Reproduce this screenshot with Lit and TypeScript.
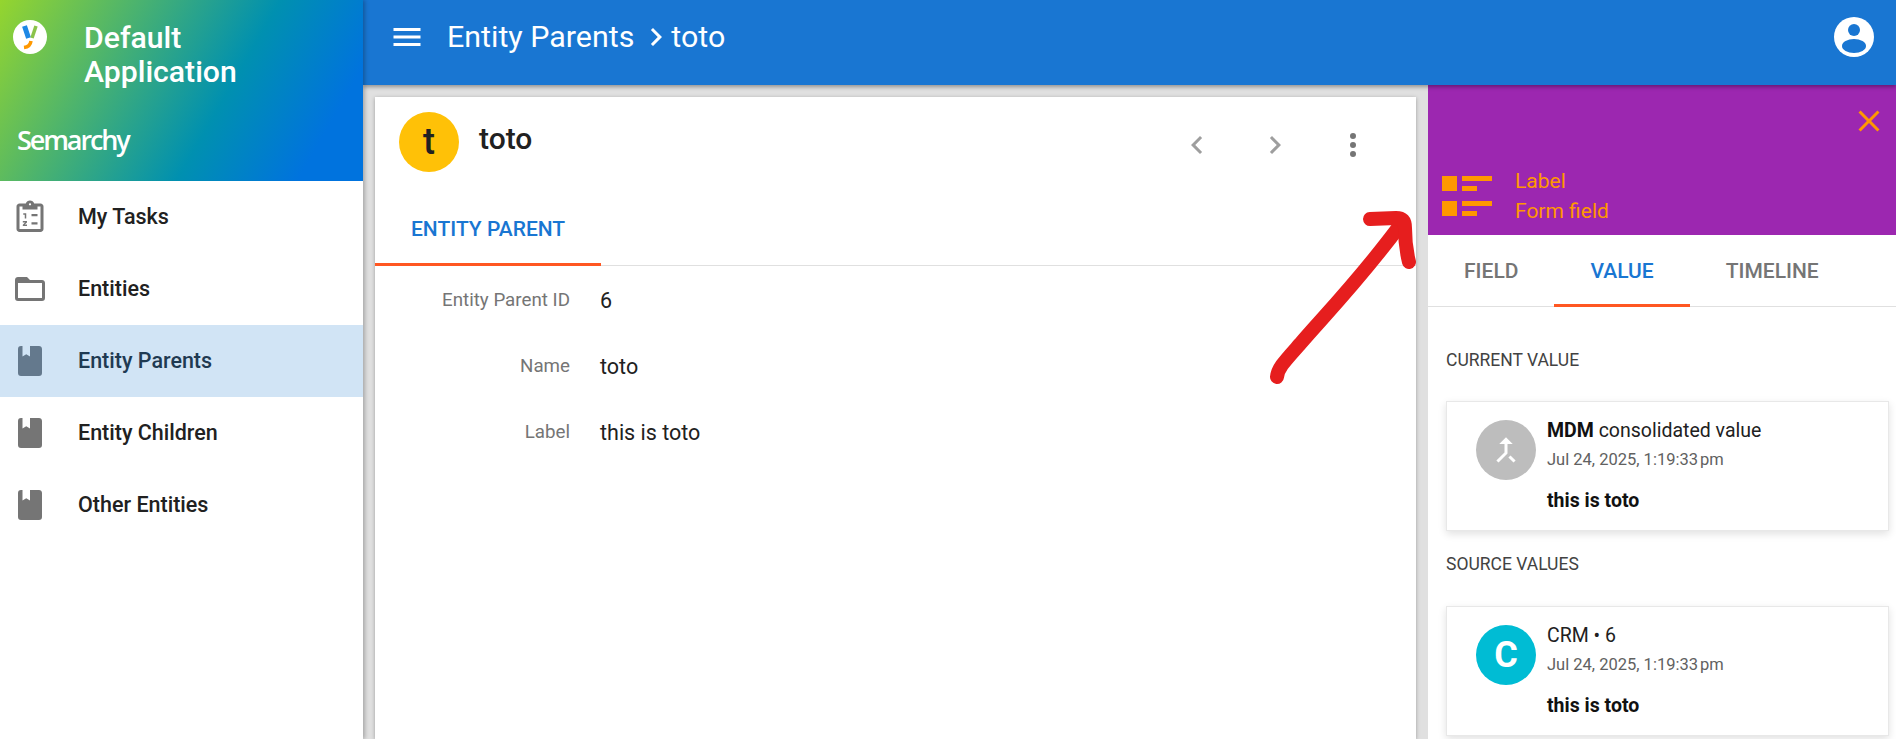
import { LitElement, css, html, svg } from 'lit';
import { customElement } from 'lit/decorators.js';

const BOOK = 'M18,22A2,2 0 0,0 20,20V4C20,2.89 19.1,2 18,2H12V9L9.5,7.5L7,9V2H6A2,2 0 0,0 4,4V20A2,2 0 0,0 6,22H18Z';
const FOLDER = 'M20,18H4V8H20M20,6H12L10,4H4C2.89,4 2,4.89 2,6V18A2,2 0 0,0 4,20H20A2,2 0 0,0 22,18V8C22,6.89 21.1,6 20,6Z';
const TASKS = 'M19,3H14.82C14.4,1.84 13.3,1 12,1C10.7,1 9.6,1.84 9.18,3H5C3.9,3 3,3.9 3,5V20C3,21.1 3.9,22 5,22H19C20.1,22 21,21.1 21,20V5C21,3.9 20.1,3 19,3M12,2.75A.75,.75 0 0,1 12.75,3.5A.75,.75 0 0,1 12,4.25A.75,.75 0 0,1 11.25,3.5A.75,.75 0 0,1 12,2.75M19,20H5V5H7V7H17V5H19V20M13,10H17V11.5H13V10M13,15.5H17V17H13V15.5M7.5,9.5H9.5V13H8.5V10.5H7.5V9.5M7.2,14.7H10V15.6L8.5,17H10V18H7.2V17.1L8.7,15.7H7.2V14.7Z';

const NAV = [
  { label: 'My Tasks', icon: TASKS },
  { label: 'Entities', icon: FOLDER },
  { label: 'Entity Parents', icon: BOOK, active: true },
  { label: 'Entity Children', icon: BOOK },
  { label: 'Other Entities', icon: BOOK },
];

const FIELDS = [
  ['Entity Parent ID', '6'],
  ['Name', 'toto'],
  ['Label', 'this is toto'],
];

const icon = (d: string, cls = '') => html`<svg class="icon ${cls}" viewBox="0 0 24 24">${svg`<path d=${d}></path>`}</svg>`;

@customElement('app-root')
export class AppRoot extends LitElement {
  static styles = css`
    :host {
      display: grid;
      grid-template-columns: 363px 1fr;
      width: 1896px;
      height: 739px;
      overflow: hidden;
      position: relative;
      font-family: Roboto, sans-serif;
      background: #e0e0e0;
      color: #212121;
    }
    .icon {
      width: 36px;
      height: 36px;
      fill: currentColor;
      flex: none;
      display: block;
    }

    /* sidebar */
    .side {
      background: #fff;
      box-shadow: 2px 0 4px rgba(0, 0, 0, 0.25);
      position: relative;
      z-index: 3;
    }
    .brand {
      height: 181px;
      box-sizing: border-box;
      background: linear-gradient(120deg, #95d52e 0%, #0090b0 60%, #0073de 86%);
      color: #fff;
      padding: 20px 0 0 13px;
    }
    .brand-top {
      display: flex;
      gap: 37px;
      height: 105px;
    }
    .logo {
      width: 34px;
      height: 34px;
      flex: none;
    }
    .app-name {
      font-size: 30.2px;
      font-weight: 500;
      line-height: 34px;
      padding-top: 1px;
    }
    .wordmark {
      font-family: 'Open Sans', sans-serif;
      font-size: 27px;
      font-weight: 600;
      letter-spacing: -2.1px;
      line-height: 30px;
      margin-left: 4px;
    }
    .nav-item {
      height: 72px;
      box-sizing: border-box;
      display: flex;
      align-items: center;
      gap: 30px;
      padding-left: 12px;
      font-size: 21.5px;
      font-weight: 500;
      color: #212121;
    }
    .nav-item span {
      margin-top: -2px;
    }
    .nav-item .icon {
      color: #757575;
    }
    .nav-item.active {
      background: #d1e4f5;
      color: #1f3a52;
    }
    .nav-item.active .icon {
      color: #64798d;
    }

    /* main column */
    .main {
      display: flex;
      flex-direction: column;
      min-width: 0;
    }
    .topbar {
      height: 85px;
      flex: none;
      background: #1976d2;
      color: #fff;
      display: flex;
      align-items: center;
      padding: 0 22px 12px 26px;
      box-sizing: border-box;
      box-shadow: 0 2px 4px rgba(0, 0, 0, 0.35);
      position: relative;
      z-index: 2;
      font-size: 30.4px;
    }
    .burger {
      width: 36px;
      height: 36px;
      margin-right: 22px;
    }
    .crumb-sep {
      width: 36px;
      height: 36px;
      margin: 0 -3px 0 4px;
    }
    .account {
      width: 48px;
      height: 48px;
      margin-left: auto;
      margin-right: -4px;
    }
    .body {
      flex: 1;
      display: flex;
      min-height: 0;
    }

    /* record card */
    .card {
      flex: 1;
      margin: 12px 12px 0;
      background: #fff;
      box-shadow: 0 1px 4px rgba(0, 0, 0, 0.3);
    }
    .card-head {
      display: flex;
      align-items: center;
      height: 96px;
      padding: 0 24px 0 24px;
      box-sizing: border-box;
    }
    .avatar {
      width: 60px;
      height: 60px;
      border-radius: 50%;
      flex: none;
      display: flex;
      align-items: center;
      justify-content: center;
    }
    .avatar.amber {
      background: #ffc107;
      color: #212121;
      font-size: 36px;
      font-weight: 500;
      margin-top: -6px;
    }
    .avatar.grey {
      background: #bdbdbd;
      color: #fff;
    }
    .avatar.cyan {
      background: #00bcd4;
      color: #fff;
      font-size: 36px;
      font-weight: 700;
    }
    .record-name {
      font-size: 30px;
      font-weight: 500;
      margin: -14px 0 0 20px;
      flex: 1;
    }
    .head-btn {
      width: 78px;
      display: flex;
      justify-content: center;
      color: #9e9e9e;
    }
    .head-btn.more {
      color: #757575;
    }
    .tabs {
      display: flex;
      border-bottom: 1px solid #e0e0e0;
      height: 73px;
      box-sizing: border-box;
    }
    .tab {
      padding: 2px 36px 2px;
      display: flex;
      align-items: center;
      font-size: 21px;
      font-weight: 500;
      color: #757575;
      margin-bottom: -1px;
      box-sizing: border-box;
    }
    .tab.active {
      color: #1976d2;
      border-bottom: 3px solid #ff5722;
      padding-bottom: 0;
    }
    .fields {
      display: grid;
      grid-template-columns: 195px 1fr;
      column-gap: 30px;
      grid-auto-rows: 66px;
      align-items: center;
      padding-top: 1px;
    }
    .field-label {
      text-align: right;
      font-size: 18.75px;
      color: #757575;
    }
    .field-value {
      font-size: 21.5px;
      color: #212121;
    }

    /* right panel */
    .panel {
      width: 468px;
      flex: none;
      background: #fff;
    }
    .panel-head {
      height: 150px;
      background: #9c27b0;
      color: #ff9800;
      display: flex;
      flex-direction: column;
      justify-content: flex-end;
      position: relative;
      box-sizing: border-box;
      padding: 0 0 9px 14px;
    }
    .panel-close {
      position: absolute;
      top: 18px;
      right: 9px;
    }
    .panel-title {
      display: flex;
      align-items: center;
      gap: 23px;
    }
    .panel-title svg {
      width: 50px;
      height: 40px;
      fill: currentColor;
      flex: none;
    }
    .panel-title div {
      font-size: 21px;
      line-height: 30px;
    }
    .panel .tabs {
      height: 72px;
    }
    .panel-content {
      padding: 0 7px 0 18px;
    }
    .section {
      font-size: 17.5px;
      color: #424242;
      height: 94px;
      padding-top: 41px;
      box-sizing: border-box;
      line-height: 24px;
    }
    .value-card {
      display: flex;
      height: 130px;
      box-sizing: border-box;
      padding: 18px 29px;
      gap: 11px;
      border: 1px solid #e8e8e8;
      box-shadow: 0 3px 8px rgba(0, 0, 0, 0.12);
      background: #fff;
    }
    .value-title {
      font-size: 19.5px;
      line-height: 22px;
      color: #212121;
    }
    .value-title b {
      font-weight: 700;
      color: #111;
    }
    .value-date {
      font-size: 16.5px;
      color: #616161;
      line-height: 22px;
      margin-top: 7px;
    }
    .value-text {
      font-size: 19.5px;
      font-weight: 700;
      color: #111;
      margin-top: 19px;
      line-height: 22px;
    }
    .second {
      height: 75px;
      padding-top: 21px;
    }

    /* hand drawn annotation over the screenshot */
    .arrow {
      position: absolute;
      left: 1260px;
      top: 200px;
      width: 170px;
      height: 190px;
      fill: none;
      stroke: #e61e1e;
      stroke-width: 14;
      stroke-linecap: round;
      stroke-linejoin: round;
      z-index: 5;
      pointer-events: none;
    }
  `;

  private valueCard(avatar: unknown, cls: string, title: unknown) {
    return html`
      <div class="value-card">
        <div class="avatar ${cls}">${avatar}</div>
        <div>
          <div class="value-title">${title}</div>
          <div class="value-date">Jul 24, 2025, 1:19:33\u202fpm</div>
          <div class="value-text">this is toto</div>
        </div>
      </div>
    `;
  }

  render() {
    return html`
      <aside class="side">
        <div class="brand">
          <div class="brand-top">
            <svg class="logo" viewBox="0 0 34 34">
              <circle cx="17" cy="17" r="17" fill="#fff"></circle>
              <path d="M11.5 6 L15.5 18" stroke="#1e88e5" stroke-width="5" fill="none"></path>
              <path d="M23 6 L19 18" stroke="#8bc34a" stroke-width="3.5" fill="none"></path>
              <path d="M18 21 C17.5 25 15 27 11 27.5" stroke="#ff9800" stroke-width="3.5" fill="none"></path>
            </svg>
            <div class="app-name">Default<br />Application</div>
          </div>
          <div class="wordmark">Semarchy</div>
        </div>
        ${NAV.map(n => html`
          <div class="nav-item ${n.active ? 'active' : ''}">${icon(n.icon)}<span>${n.label}</span></div>
        `)}
      </aside>

      <div class="main">
        <header class="topbar">
          <svg class="icon burger" viewBox="0 0 24 24"><path d="M3,6H21V8H3V6M3,11H21V13H3V11M3,16H21V18H3V16Z"></path></svg>
          <span>Entity Parents</span>
          <svg class="icon crumb-sep" viewBox="0 0 24 24"><path d="M8.59,16.59L13.17,12L8.59,7.41L10,6L16,12L10,18L8.59,16.59Z"></path></svg>
          <span>toto</span>
          <svg class="account" viewBox="0 0 48 48">
            <circle cx="24" cy="24" r="20" fill="#fff"></circle>
            <circle cx="24" cy="17" r="6" fill="#1976d2"></circle>
            <ellipse cx="24" cy="33" rx="12" ry="7" fill="#1976d2"></ellipse>
          </svg>
        </header>

        <div class="body">
          <section class="card">
            <div class="card-head">
              <div class="avatar amber">t</div>
              <div class="record-name">toto</div>
              <div class="head-btn">${icon('M15.41,7.41L14,6L8,12L14,18L15.41,16.59L10.83,12L15.41,7.41Z')}</div>
              <div class="head-btn">${icon('M8.59,16.59L13.17,12L8.59,7.41L10,6L16,12L10,18L8.59,16.59Z')}</div>
              <div class="head-btn more">${icon('M12,16A2,2 0 0,1 14,18A2,2 0 0,1 12,20A2,2 0 0,1 10,18A2,2 0 0,1 12,16M12,10A2,2 0 0,1 14,12A2,2 0 0,1 12,14A2,2 0 0,1 10,12A2,2 0 0,1 12,10M12,4A2,2 0 0,1 14,6A2,2 0 0,1 12,8A2,2 0 0,1 10,6A2,2 0 0,1 12,4Z')}</div>
            </div>
            <div class="tabs"><div class="tab active">ENTITY PARENT</div></div>
            <div class="fields">
              ${FIELDS.map(([k, v]) => html`
                <div class="field-label">${k}</div>
                <div class="field-value">${v}</div>
              `)}
            </div>
          </section>

          <section class="panel">
            <div class="panel-head">
              <div class="panel-close">${icon('M19,6.41L17.59,5L12,10.59L6.41,5L5,6.41L10.59,12L5,17.59L6.41,19L12,13.41L17.59,19L19,17.59L13.41,12L19,6.41Z')}</div>
              <div class="panel-title">
                <svg viewBox="0 0 50 40">
                  <rect width="15" height="15" y="0"></rect>
                  <rect x="20" width="30" height="5" y="0"></rect>
                  <rect x="20" width="15" height="5" y="10"></rect>
                  <rect width="15" height="15" y="25"></rect>
                  <rect x="20" width="30" height="5" y="25"></rect>
                  <rect x="20" width="15" height="5" y="35"></rect>
                </svg>
                <div>Label<br />Form field</div>
              </div>
            </div>
            <div class="tabs">
              <div class="tab">FIELD</div>
              <div class="tab active">VALUE</div>
              <div class="tab">TIMELINE</div>
            </div>
            <div class="panel-content">
              <div class="section">CURRENT VALUE</div>
              ${this.valueCard(
                icon('M17 20.41L18.41 19 15 15.59 13.59 17 17 20.41zM7.5 8H11v5.59L5.59 19 7 20.41l6-6V8h3.5L12 3.5 7.5 8z'),
                'grey',
                html`<b>MDM</b> consolidated value`
              )}
              <div class="section second">SOURCE VALUES</div>
              ${this.valueCard('C', 'cyan', 'CRM \u2022 6')}
            </div>
          </section>
        </div>
      </div>

      <svg class="arrow" viewBox="0 0 170 190">
        <path d="M17 177 C18 168 24 162 40 144 C62 118 98 82 141 24"></path>
        <path d="M110 19 L136 18 C143 18 145 21 145 28 C145 40 146 50 149 62"></path>
      </svg>
    `;
  }
}
